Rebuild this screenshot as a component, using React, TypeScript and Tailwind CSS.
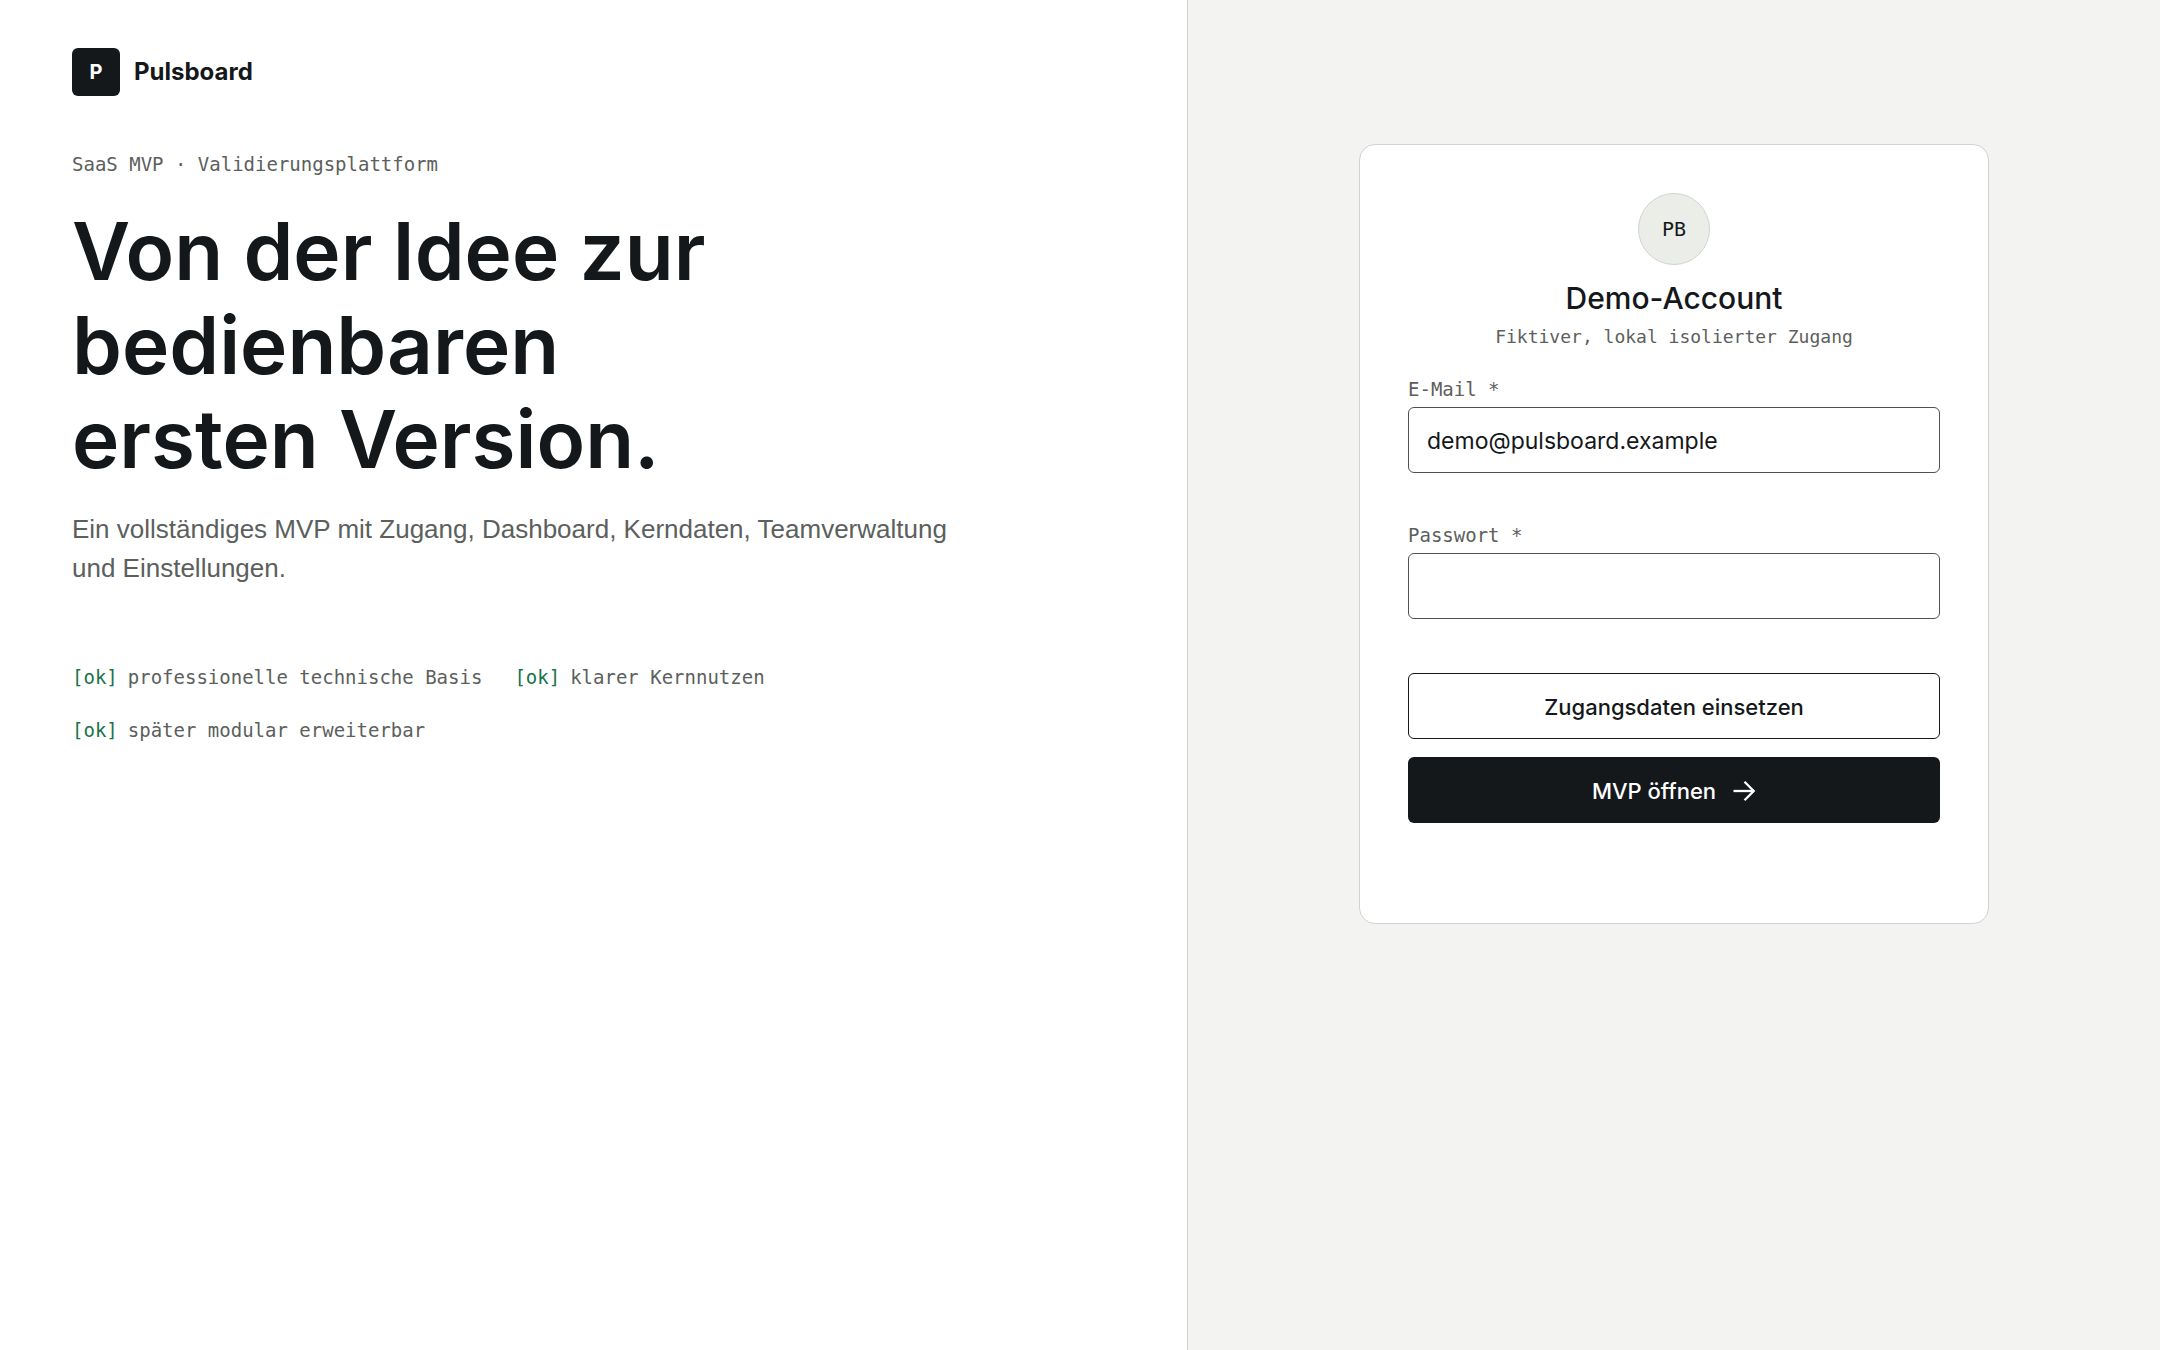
import React, { useState } from 'react';

const DEMO_EMAIL = 'demo@pulsboard.example';
const DEMO_PASSWORD = 'pulsboard-demo';

const highlights = [
    'professionelle technische Basis',
    'klarer Kernnutzen',
    'später modular erweiterbar',
];

const mono = "font-['DejaVu_Sans_Mono',monospace]";

const ArrowIcon: React.FC = () => (
    <svg width="24" height="24" viewBox="0 0 24 24" fill="none" stroke="currentColor" strokeWidth="2.3" aria-hidden="true">
        <path d="M1.5 12H22" />
        <path d="M12.5 2.8L21.7 12L12.5 21.2" />
    </svg>
);

interface FieldProps {
    id: string;
    label: string;
    type: string;
    value: string;
    onChange: (value: string) => void;
}

const Field: React.FC<FieldProps> = ({ id, label, type, value, onChange }) => (
    <div className="mb-12">
        <label htmlFor={id} className={`${mono} block text-[19px] leading-7 text-[#5c605d]`}>{label} *</label>
        <input
            id={id}
            type={type}
            value={value}
            required
            onChange={e => onChange(e.target.value)}
            className="mt-1 block h-[66px] w-full rounded-md border border-[#4f5351] bg-white px-[18px] pt-[2px] text-[23px] text-[#14181b]"
        />
    </div>
);

const LoginCard: React.FC = () => {
    const [email, setEmail] = useState(DEMO_EMAIL);
    const [password, setPassword] = useState('');

    const fillCredentials = () => {
        setEmail(DEMO_EMAIL);
        setPassword(DEMO_PASSWORD);
    };

    return (
        <form
            onSubmit={e => e.preventDefault()}
            className="w-full max-w-[630px] rounded-2xl border border-[#d0d3d0] bg-white px-12 pt-12 pb-[100px]"
        >
            <div className="mb-6 flex flex-col items-center text-center">
                <div className={`${mono} flex size-18 items-center justify-center rounded-full border border-[#d0d3d0] bg-[#eaede8] text-xl font-medium text-[#14181b]`}>PB</div>
                <h2 className="mt-3 text-[30px] leading-[42px] font-medium">Demo-Account</h2>
                <p className={`${mono} mt-1 text-lg leading-7 text-[#5c605d]`}>Fiktiver, lokal isolierter Zugang</p>
            </div>
            <Field id="email" label="E-Mail" type="email" value={email} onChange={setEmail} />
            <Field id="password" label="Passwort" type="password" value={password} onChange={setPassword} />
            <div className="mt-[54px] flex flex-col gap-[18px]">
                <button type="button" onClick={fillCredentials} className="h-[66px] rounded-md border border-[#14181b] bg-white pt-[2px] text-[22px] font-medium">
                    Zugangsdaten einsetzen
                </button>
                <button type="submit" className="flex h-[66px] items-center justify-center gap-4 rounded-md bg-[#14181b] pt-[2px] text-[22px] font-medium text-white">
                    MVP öffnen
                    <ArrowIcon />
                </button>
            </div>
        </form>
    );
};

const App: React.FC = () => {
    return (
        <main className="grid min-h-screen grid-cols-[55fr_45fr] bg-white font-['Inter',sans-serif] text-[#14181b]">
            <section className="border-r border-[#d0d3d0] px-18 py-12">
                <div className="flex items-center gap-[14px]">
                    <span className="flex size-12 items-center justify-center rounded-md bg-[#14181b] text-xl font-bold text-white">P</span>
                    <span className="text-2xl font-bold">Pulsboard</span>
                </div>
                <p className={`${mono} mt-[54px] text-[19px] leading-7 text-[#5c605d]`}>SaaS MVP · Validierungsplattform</p>
                <h1 className="mt-[26px] max-w-[700px] text-[80px] leading-[94px] font-semibold">
                    Von der Idee zur bedienbaren ersten Version.
                </h1>
                <p className="mt-6 max-w-[900px] font-['Liberation_Sans',sans-serif] text-[26px] leading-[39px] text-[#5c605d]">
                    Ein vollständiges MVP mit Zugang, Dashboard, Kerndaten, Teamverwaltung und Einstellungen.
                </p>
                <ul className={`${mono} mt-[75px] flex flex-wrap gap-x-8 gap-y-[25px] text-[19px] leading-7 text-[#5c605d]`}>
                    {highlights.map(item => (
                        <li key={item} className="flex gap-[10px]">
                            <span className="text-[#17734a]">[ok]</span>
                            <span>{item}</span>
                        </li>
                    ))}
                </ul>
            </section>
            <section className="flex items-start justify-center bg-[#f3f4f2] px-12 pt-36">
                <LoginCard />
            </section>
        </main>
    );
};

export default App;
